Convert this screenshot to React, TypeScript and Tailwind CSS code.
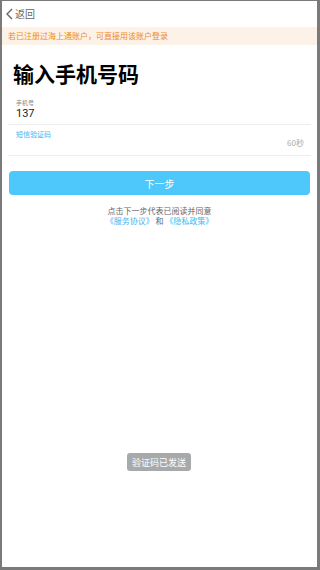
import React from 'react';

export default function App() {
  return (
    <div
      className="w-[320px] h-[570px] bg-[#7a7a7a] pt-px pl-[2px] pr-[3px] pb-[3px]"
      style={{ fontFamily: '"Noto Sans CJK SC", "Noto Sans", sans-serif' }}
    >
      <div className="relative h-full bg-white flex flex-col">
        {/* header */}
        <div className="h-[26px] flex items-center pl-[3px] text-[#555]">
          <svg width="9" height="12" viewBox="0 0 9 12" className="mr-[1px]">
            <path d="M7 1 L2 6 L7 11" fill="none" stroke="#666" strokeWidth="1.4" />
          </svg>
          <span className="text-[10px] leading-none text-[#666]">返回</span>
        </div>

        {/* notice */}
        <div className="h-[18px] bg-[#fdf2e7] flex items-center pl-[6px]">
          <span className="text-[8px] leading-none text-[#ef8a24]">若已注册过海上通账户，可直接用该账户登录</span>
        </div>

        {/* title */}
        <h1 className="mt-[15px] ml-[11px] text-[21px] leading-[26px] font-bold text-black">输入手机号码</h1>

        {/* phone field */}
        <div className="mt-[13px] mx-[6px] h-[26px] border-b border-[#ececec] pl-[8px]">
          <div className="text-[6px] leading-[8px] text-[#888]">手机号</div>
          <div className="text-[11px] leading-[13px] text-[#222]" style={{ fontFamily: 'Roboto, sans-serif' }}>
            137
          </div>
        </div>

        {/* sms field */}
        <div className="mx-[6px] h-[31px] border-b border-[#ececec] pl-[8px] pr-[7px] pt-[5px]">
          <div className="text-[7px] leading-[8px] text-[#3fb6f2]">短信验证码</div>
          <div className="flex justify-end">
            <span className="text-[8px] leading-[10px] text-[#aaa]">60秒</span>
          </div>
        </div>

        {/* button */}
        <button className="mt-[15px] mx-[7px] h-[24px] rounded-[4px] bg-[#4ec8fb] text-white text-[10px] flex items-center justify-center">
          下一步
        </button>

        {/* agreement */}
        <div className="mt-[11px] flex flex-col items-center text-[8px] leading-[10px]">
          <span className="text-[#666]">点击下一步代表已阅读并同意</span>
          <span className="text-[#666]">
            <span className="text-[#3fb6f2]">《服务协议》</span> 和 <span className="text-[#3fb6f2]">《隐私政策》</span>
          </span>
        </div>

        {/* toast */}
        <div className="absolute left-[125px] top-[452px] h-[18px] px-[5px] rounded-[3px] bg-[#a7a9ab] flex items-center">
          <span className="text-[9px] leading-none text-white">验证码已发送</span>
        </div>
      </div>
    </div>
  );
}
